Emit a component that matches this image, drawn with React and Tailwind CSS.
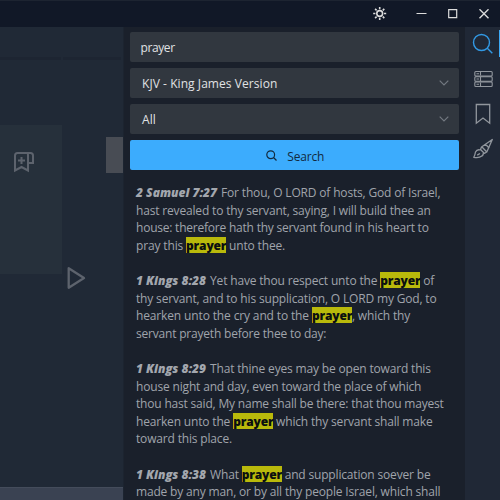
const Mark = ({ children }) => (
  <span className="inline-block h-[16px] w-[40px] bg-[#b9b90b] align-top font-extrabold leading-[17.6px] tracking-[-0.15px] text-[#0b0f10]">{children}</span>
);
const Ref = ({ children }) => (
  <span className="mr-[4px] font-extrabold italic tracking-[0px] text-[#a3a7ae]">{children}</span>
);
const Line = ({ children, className = "tracking-[-0.17px]" }) => (
  <div className={"h-[17.6px] whitespace-pre " + className}>{children}</div>
);

function TitleBar() {
  return (
    <header className="flex h-[27px] shrink-0 items-center justify-end border-t border-[#1d2431] bg-[#111827] text-[#dcdcdc]">
      <svg className="mr-[29px] h-[14px] w-[14px]" viewBox="0 0 14 14" fill="none" stroke="currentColor" strokeWidth="1.6">
        <circle cx="6.700" cy="6.500" r="2.900" />
        <path d="M6.700 0v2.200M6.700 10.800V13M.2 6.500h2.200M11 6.500h2.200M2.100 1.900l1.500 1.500M9.800 9.600l1.500 1.500M2.100 11.100l1.500-1.500M9.800 3.400l1.500-1.500" />
      </svg>
      <svg className="mr-[20px] h-[12px] w-[12px]" viewBox="0 0 12 12" stroke="currentColor"><path d="M.5 5.500h10" /></svg>
      <svg className="mr-[21px] h-[10px] w-[10px]" viewBox="0 0 10 10" fill="none" stroke="currentColor" strokeWidth="1.2"><path d="M.7.700h8v8h-8z" /></svg>
      <svg className="mr-[11px] h-[10px] w-[10px]" viewBox="0 0 10 10" stroke="currentColor" strokeWidth="1.4"><path d="M.5.300l9 9M9.500.300l-9 9" /></svg>
    </header>
  );
}

function Backdrop() {
  return (
    <section className="flex w-[124px] shrink-0 flex-col border-r border-[#1c2430] bg-[#202936]">
      <div className="mt-[30px] flex h-[3px] gap-[2px]">
        <div className="w-[61px] bg-[#1d2532]" />
        <div className="w-[58px] bg-[#1d2532]" />
      </div>
      <div className="mt-[65px] flex h-[149px] justify-between">
        <div className="w-[62px] bg-[#26303b] pl-[13px] pt-[26px]">
          <svg className="h-[22px] w-[22px]" viewBox="0 0 22 22" fill="none" stroke="#5d636d" strokeWidth="2">
            <path d="M2 19.500V4.500Q2 2 4.500 2h9.200Q15 2 15 4v15.500l-6.500-3.500z" />
            <path d="M13.500 2h4Q20 2 20 4.500V12h-5M8.500 6v7M5 9.500h7" />
          </svg>
        </div>
        <div className="mt-[12px] h-[36px] w-[17px] bg-[#484c54]" />
      </div>
      <svg className="ml-[66px] mt-[-8px] h-[24px] w-[20px]" viewBox="0 0 20 24" fill="none" stroke="#5d636d" strokeWidth="2.3">
        <path d="M2.700 2.200v19.600L18 12z" strokeLinejoin="round" />
      </svg>
      <div className="mt-auto h-[13px] border-t border-[#444c5b] bg-[#3a4252]" />
    </section>
  );
}

const Select = ({ children }) => (
  <div className="flex h-[30px] shrink-0 items-center justify-between rounded-[2px] bg-[#31373f] pl-[12px] pr-[10px]">
    <span className="pt-[2px] tracking-[0.06px]">{children}</span>
    <svg className="h-[6px] w-[10px]" viewBox="0 0 10 6" fill="none" stroke="#737981" strokeWidth="1.2"><path d="M.7.7L5 5 9.300.7" /></svg>
  </div>
);

function SearchPanel() {
  return (
    <main className="flex w-[341px] shrink-0 flex-col overflow-hidden bg-[#1a202b] text-[12px] text-[#e0e2e4]">
      <div className="ml-[6px] mr-[6.5px] mt-[5px] flex shrink-0 flex-col gap-[6px]">
        <div className="flex h-[30px] items-center rounded-[2px] bg-[#31373f] pl-[10.5px] pt-[2px] tracking-[-0.4px]">prayer</div>
        <Select>KJV - King James Version</Select>
        <Select>All</Select>
        <button className="flex h-[30px] items-center justify-center rounded-[2px] bg-[#3cacfd] pl-[2px] text-[#122a3e]">
          <svg className="mr-[10px] h-[11px] w-[11px]" viewBox="0 0 11 11" fill="none" stroke="currentColor" strokeWidth="1.200"><circle cx="4.700" cy="4.700" r="3.900" /><path d="M7.500 7.500l3 3" /></svg>
          <span className="pt-[3px] tracking-[-0.2px]">Search</span>
        </button>
      </div>
      <div className="ml-[12px] mt-[14px] flex flex-col gap-[17.6px] leading-[17.6px] text-[#a0a4ab]">
        <article>
          <Line><Ref>2 Samuel 7:27</Ref>For thou, O LORD of hosts, God of Israel,</Line>
          <Line>hast revealed to thy servant, saying, I will build thee an</Line>
          <Line className="tracking-[-0.22px]">house: therefore hath thy servant found in his heart to</Line>
          <Line className="tracking-[-0.15px]">pray this <Mark>prayer</Mark> unto thee.</Line>
        </article>
        <article>
          <Line><Ref>1 Kings 8:28</Ref>Yet have thou respect unto the <Mark>prayer</Mark> of</Line>
          <Line>thy servant, and to his supplication, O LORD my God, to</Line>
          <Line className="tracking-[-0.14px]">hearken unto the cry and to the <Mark>prayer</Mark>, which thy</Line>
          <Line className="tracking-[-0.2px]">servant prayeth before thee to day:</Line>
        </article>
        <article>
          <Line><Ref>1 Kings 8:29</Ref>That thine eyes may be open toward this</Line>
          <Line>house night and day, even toward the place of which</Line>
          <Line className="tracking-[-0.19px]">thou hast said, My name shall be there: that thou mayest</Line>
          <Line>hearken unto the <Mark>prayer</Mark> which thy servant shall make</Line>
          <Line>toward this place.</Line>
        </article>
        <article>
          <Line><Ref>1 Kings 8:38</Ref>What <Mark>prayer</Mark> and supplication soever be</Line>
          <Line>made by any man, or by all thy people Israel, which shall</Line>
        </article>
      </div>
    </main>
  );
}

function SideRail() {
  return (
    <nav className="flex w-[35px] shrink-0 bg-[#202836] text-[#91969d]">
      <div className="flex w-[34px] flex-col items-start pl-[7px]">
        <svg className="mt-[6px] h-[22px] w-[22px] text-[#3299e4]" viewBox="0 0 22 22" fill="none" stroke="currentColor" strokeWidth="1.400"><circle cx="9.500" cy="9.500" r="8" /><path d="M15.300 15.300l5 5" /></svg>
        <svg className="ml-[2px] mt-[15px] h-[18px] w-[19px]" viewBox="0 0 19 18" fill="none" stroke="currentColor" strokeWidth="1.100">
          <rect x=".8" y="1.500" width="17.400" height="4.600" rx="1" />
          <rect x=".8" y="6.700" width="17.400" height="4.600" rx="1" />
          <rect x=".8" y="11.900" width="17.400" height="4.600" rx="1" />
          <path d="M6.500 1.500v4M6.500 7v4M6.500 12.500v4M2.500 3.800h2.500M2.500 9h2.500M2.500 14.200h2.500" />
        </svg>
        <svg className="ml-[3px] mt-[15px] h-[22px] w-[16px]" viewBox="0 0 16 22" fill="none" stroke="currentColor" strokeWidth="1.300"><path d="M1.300 1.500h13.400v18.700L8 15l-6.700 5.200z" /></svg>
        <svg className="ml-px mt-[13px] h-[21px] w-[20px]" viewBox="0 0 20 21" fill="none" stroke="currentColor" strokeWidth="1.300" strokeLinejoin="round">
          <path d="M19.300 1.500L8.500 9 7.500 11.500l3.800 3.800 2.500-1.300zM9 9l4.800 5M12.500 6.200l3.800 4" />
          <path d="M7.500 12q-3.500-1-5 2Q2 17 .8 19.300q5.500.8 8-1.200 2-1.300 1.400-3.400M4 16.800q2 .2 2.700-1.500" />
        </svg>
      </div>
      <div className="mt-[3px] h-[27px] w-[1px] bg-[#3ca9f5]" />
    </nav>
  );
}

export default function App() {
  return (
    <div className="flex h-[500px] w-[500px] flex-col overflow-hidden bg-[#1a202b] font-['Open_Sans','Noto_Sans',sans-serif]">
      <TitleBar />
      <div className="flex min-h-0 flex-1">
        <Backdrop />
        <SearchPanel />
        <SideRail />
      </div>
    </div>
  );
}
